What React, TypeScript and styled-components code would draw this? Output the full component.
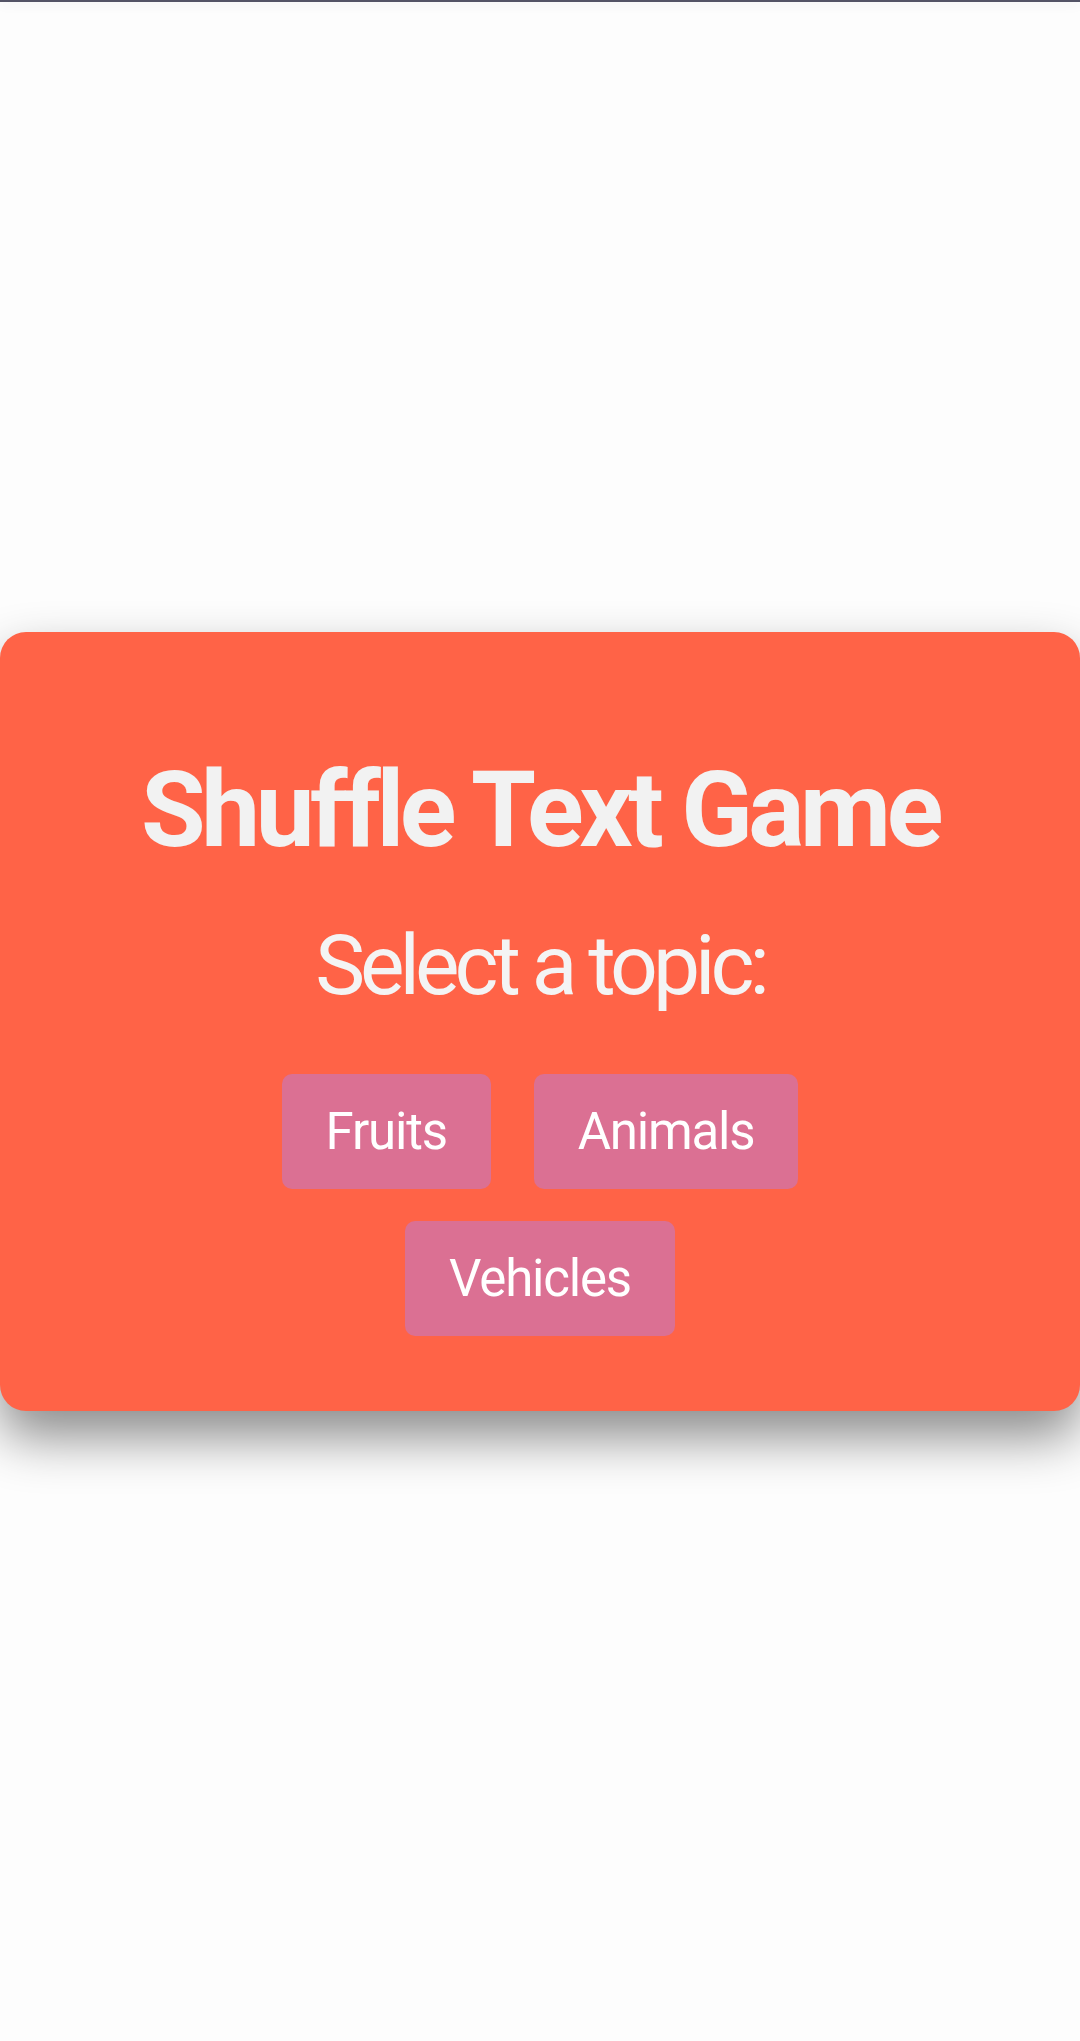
import React from "react";
import styled, { createGlobalStyle } from "styled-components";

const GlobalStyle = createGlobalStyle`
  html, body {
    margin: 0;
    padding: 0;
    background: #fdfdfd;
    font-family: Roboto, "Noto Sans", "Liberation Sans", sans-serif;
  }
`;

const Page = styled.div`
  min-height: 2041px;
  display: flex;
  flex-direction: column;
`;

const TopBar = styled.div`
  height: 2px;
  background: #545466;
  box-shadow: 0 2px 12px rgba(0, 0, 0, 0.12);
`;

const Main = styled.main`
  flex: 1;
  display: flex;
  align-items: center;
`;

const Card = styled.section`
  width: 100%;
  box-sizing: border-box;
  background: #ff6347;
  border-radius: 26px;
  padding: 117px 0 75px;
  text-align: center;
  box-shadow: 0 26px 52px rgba(0, 0, 0, 0.45);
`;

const Title = styled.h1`
  margin: 0 0 45px;
  font-size: 105px;
  line-height: 123px;
  font-weight: 700;
  letter-spacing: -4.4px;
  color: #f2f2f2;
`;

const Subtitle = styled.p`
  margin: 0 0 59px;
  font-size: 84px;
  line-height: 98px;
  font-weight: 400;
  letter-spacing: -5px;
  color: #f4f4f4;
`;

const Topics = styled.div`
  display: flex;
  flex-wrap: wrap;
  justify-content: center;
  column-gap: 43px;
  row-gap: 32px;
  max-width: 560px;
  margin: 0 auto;
`;

const TopicButton = styled.button`
  height: 115px;
  padding: 0 44px;
  border: none;
  border-radius: 10px;
  background: #db7093;
  color: #ffffff;
  font-family: inherit;
  font-size: 51px;
  font-weight: 400;
  letter-spacing: -1.2px;
  cursor: pointer;
`;

const topics = ["Fruits", "Animals", "Vehicles"];

export default function App() {
  return (
    <>
      <GlobalStyle />
      <Page>
        <TopBar />
        <Main>
          <Card>
            <Title>Shuffle Text Game</Title>
            <Subtitle>Select a topic:</Subtitle>
            <Topics>
              {topics.map((t) => (
                <TopicButton key={t}>{t}</TopicButton>
              ))}
            </Topics>
          </Card>
        </Main>
      </Page>
    </>
  );
}
